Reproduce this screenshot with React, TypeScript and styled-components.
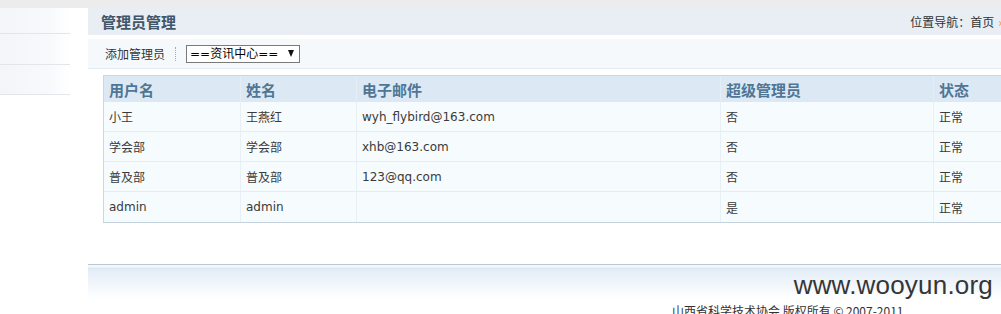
import React from 'react'
import styled, { createGlobalStyle } from 'styled-components'

const GlobalStyle = createGlobalStyle`
  html, body {
    margin: 0;
    padding: 0;
    background: #fff;
    overflow: hidden;
  }
  body {
    font-family: "DejaVu Sans", "Noto Sans CJK SC", sans-serif;
    font-size: 12px;
    color: #333;
  }
`

const Page = styled.div`
  position: relative;
  width: 1001px;
  height: 314px;
  overflow: hidden;
`

const TopStrip = styled.div`
  height: 8px;
  background: #ececec;
`

const Layout = styled.div`
  display: flex;
  gap: 18px;
`

const Sidebar = styled.div`
  width: 70px;
  flex-shrink: 0;
  display: flex;
  flex-direction: column;
`

const SideRow = styled.div<{ $h: number }>`
  height: ${p => p.$h}px;
  border-bottom: 1px solid #e2e5e9;
  background: linear-gradient(to right, #f3f5f8 0%, #f7f9fb 70%, #ffffff 100%);
`

const Main = styled.div`
  width: 930px;
  flex-shrink: 0;
`

const TitleBar = styled.div`
  height: 27px;
  display: flex;
  align-items: center;
  justify-content: space-between;
  padding: 0 14px 0 13px;
  background: #e8eef4;
`

const Title = styled.h2`
  margin: 0;
  font-family: "Noto Sans CJK SC", sans-serif;
  font-size: 15px;
  font-weight: 700;
  color: #415669;
  line-height: 27px;
`

const Crumb = styled.div`
  font-family: "Noto Sans CJK SC", sans-serif;
  font-size: 12px;
  color: #333;
  white-space: nowrap;
`

const CrumbArrow = styled.span`
  color: #e8a02e;
  margin-left: 4px;
`

const Toolbar = styled.div`
  margin-top: 4px;
  height: 29px;
  display: flex;
  align-items: center;
  gap: 10px;
  padding-left: 17px;
  background: #f6f9fc;
  border-bottom: 1px solid #e4ebf1;
  font-family: "Noto Sans CJK SC", sans-serif;
`

const Divider = styled.span`
  width: 0;
  height: 14px;
  border-left: 1px dotted #a8a8a8;
`

const SelectBox = styled.div`
  box-sizing: border-box;
  width: 114px;
  height: 18px;
  display: flex;
  align-items: center;
  justify-content: space-between;
  padding: 0 5px 0 3px;
  border: 1px solid #7a7a7a;
  background: #fff;
  color: #000;
  font-family: "DejaVu Sans", "Noto Sans CJK SC", sans-serif;
  font-size: 12px;
  line-height: 16px;
`

const Caret = styled.span`
  width: 0;
  height: 0;
  border-left: 3px solid transparent;
  border-right: 3px solid transparent;
  border-top: 7px solid #111;
`

const Grid = styled.div`
  margin: 6px 0 0 15px;
  width: 900px;
  border: 1px solid #c8d7e3;
  border-bottom-color: #c3d1dc;
`

const Row = styled.div<{ $head?: boolean }>`
  display: grid;
  grid-template-columns: 137px 116px 364px 213px 1fr;
  height: ${p => (p.$head ? 26 : 30)}px;
  background: ${p => (p.$head ? '#dce9f4' : '#f6fbfe')};
  border-bottom: ${p => (p.$head ? 'none' : '1px solid #e4edf3')};
  box-sizing: ${p => (p.$head ? 'content-box' : 'border-box')};
  &:last-child {
    border-bottom: none;
  }
`

const Cell = styled.div<{ $head?: boolean }>`
  display: flex;
  align-items: center;
  padding-left: 5px;
  border-right: 1px solid ${p => (p.$head ? '#e4eef6' : '#e8f0f5')};
  font-family: ${p =>
    p.$head ? '"Noto Sans CJK SC", sans-serif' : '"DejaVu Sans", "Noto Sans CJK SC", sans-serif'};
  font-size: ${p => (p.$head ? 15 : 12)}px;
  font-weight: ${p => (p.$head ? 700 : 400)};
  color: ${p => (p.$head ? '#4f7694' : '#3a3a3a')};
  &:last-child {
    border-right: none;
  }
`

const Footer = styled.div`
  margin-top: 41px;
  height: 60px;
  border-top: 1px solid #b7c9d3;
  padding: 37px 0 0 584px;
  box-sizing: border-box;
  background: linear-gradient(
    to bottom,
    #f4f8fb 0px,
    #f4f8fb 2px,
    #dbe7f1 3px,
    #e5eef8 6px,
    #ffffff 34px
  );
  font-family: "Noto Sans CJK SC", "DejaVu Sans", sans-serif;
  font-size: 12px;
  line-height: 18px;
  color: #333;
  white-space: nowrap;
`

const Watermark = styled.div`
  position: absolute;
  right: 8px;
  top: 270px;
  font-family: "Liberation Sans", Arial, sans-serif;
  font-size: 26px;
  color: #363636;
  letter-spacing: 0.2px;
`

const columns = ['用户名', '姓名', '电子邮件', '超级管理员', '状态']

const users = [
  { login: '小王', name: '王燕红', email: 'wyh_flybird@163.com', root: '否', state: '正常' },
  { login: '学会部', name: '学会部', email: 'xhb@163.com', root: '否', state: '正常' },
  { login: '普及部', name: '普及部', email: '123@qq.com', root: '否', state: '正常' },
  { login: 'admin', name: 'admin', email: '', root: '是', state: '正常' },
]

const App = () => {
  return (
    <Page>
      <GlobalStyle />
      <TopStrip />
      <Layout>
        <Sidebar>
          <SideRow $h={25} />
          <SideRow $h={30} />
          <SideRow $h={29} />
        </Sidebar>
        <Main>
          <TitleBar>
            <Title>管理员管理</Title>
            <Crumb>
              位置导航：首页<CrumbArrow>»</CrumbArrow>
            </Crumb>
          </TitleBar>
          <Toolbar>
            <span>添加管理员</span>
            <Divider />
            <SelectBox>
              <span>==资讯中心==</span>
              <Caret />
            </SelectBox>
          </Toolbar>
          <Grid>
            <Row $head>
              {columns.map(c => (
                <Cell $head key={c}>{c}</Cell>
              ))}
            </Row>
            {users.map(u => (
              <Row key={u.login}>
                <Cell>{u.login}</Cell>
                <Cell>{u.name}</Cell>
                <Cell>{u.email}</Cell>
                <Cell>{u.root}</Cell>
                <Cell>{u.state}</Cell>
              </Row>
            ))}
          </Grid>
          <Footer>山西省科学技术协会 版权所有 © 2007-2011</Footer>
        </Main>
      </Layout>
      <Watermark>www.wooyun.org</Watermark>
    </Page>
  )
}

export default App
